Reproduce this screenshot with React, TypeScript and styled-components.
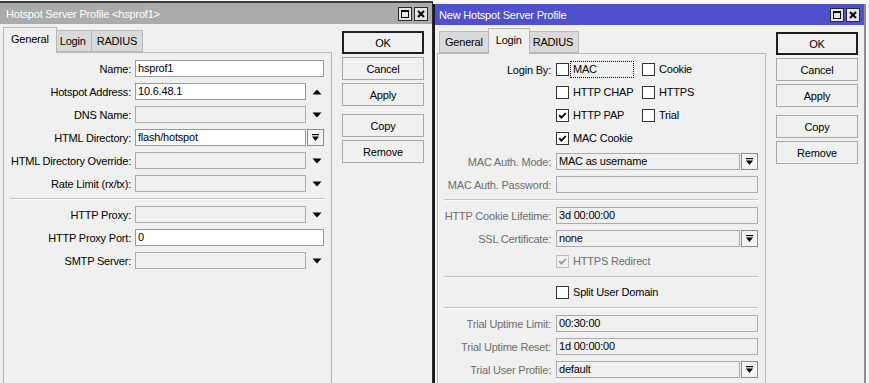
import React from 'react';
import styled, { createGlobalStyle } from 'styled-components';

const fontFamily = '"Liberation Sans", Arial, sans-serif';
const panelBg = '#f0f0f0';
const frameLine = '#b9b9b9';
const mutedText = '#6d6d6d';

const GlobalStyle = createGlobalStyle`
  html, body {
    margin: 0;
    padding: 0;
    height: 383px;
    overflow: hidden;
    background: #f7f7f7;
  }
  body {
    font-family: ${fontFamily};
    font-size: 11px;
    letter-spacing: -0.2px;
    color: #000;
  }
`;

const Desktop = styled.div`
  display: flex;
  align-items: flex-start;
  width: 869px;
  height: 383px;
  overflow: hidden;
`;

interface IWindowProps {
  $active?: boolean;
}
const Window = styled.div<IWindowProps>`
  box-sizing: border-box;
  width: 433px;
  height: ${props => (props.$active ? 379 : 382)}px;
  margin-top: ${props => (props.$active ? 4 : 1)}px;
  display: flex;
  flex-direction: column;
  background: ${panelBg};
  border-top: ${props => (props.$active ? 'none' : '2px solid #3c3c3c')};
  border-left: ${props => (props.$active ? '2px solid #1c1c1c' : 'none')};
  border-right: ${props => (props.$active ? '2px solid #8e8e8e' : '1px solid #2a2a2a')};
`;

const TitleBar = styled.div<IWindowProps>`
  height: 21px;
  flex: none;
  display: flex;
  align-items: center;
  padding: 0 3px 0 ${props => (props.$active ? 4 : 6)}px;
  background: ${props => (props.$active ? '#4e51cb' : '#ababab')};
  color: #fff;
  font-size: 11px;
`;

const TitleText = styled.span`
  flex: 1;
  white-space: nowrap;
`;

const TitleButtons = styled.div`
  display: flex;
  gap: 2px;
  margin-right: 1px;
`;

const TitleButton = styled.div`
  box-sizing: border-box;
  width: 14px;
  height: 14px;
  border: 1px solid #2b2b2b;
  background: #e4e4e4;
  display: flex;
  align-items: center;
  justify-content: center;
`;

const Body = styled.div<IWindowProps>`
  flex: 1;
  display: flex;
  padding-left: ${props => (props.$active ? 2 : 3)}px;
  min-height: 0;
`;

const TabArea = styled.div`
  width: 329px;
  display: flex;
  flex-direction: column;
  padding-top: 3px;
`;

const TabStrip = styled.div`
  height: 25px;
  display: flex;
  align-items: flex-end;
  padding-left: 2px;
  position: relative;
  z-index: 1;
`;

interface ITabProps {
  $selected?: boolean;
}
const Tab = styled.div<ITabProps>`
  box-sizing: border-box;
  height: ${props => (props.$selected ? 26 : 22)}px;
  margin: 0 ${props => (props.$selected ? -2 : 0)}px
    ${props => (props.$selected ? -1 : 0)}px;
  padding: 0 ${props => (props.$selected ? 7 : 5)}px
    ${props => (props.$selected ? 3 : 0)}px;
  border: 1px solid ${frameLine};
  border-bottom: ${props => (props.$selected ? 'none' : `1px solid ${frameLine}`)};
  background: ${props => (props.$selected ? panelBg : '#dadada')};
  position: relative;
  z-index: ${props => (props.$selected ? 2 : 0)};
  display: flex;
  align-items: center;
  white-space: nowrap;
  & + & {
    margin-left: ${props => (props.$selected ? -2 : -1)}px;
  }
`;

const Panel = styled.div`
  flex: 1;
  border: 1px solid ${frameLine};
  border-bottom: none;
  padding: 7px 7px 0 0;
  display: flex;
  flex-direction: column;
  gap: 6px;
`;

interface IRowProps {
  $labelWidth: number;
  $gap: number;
}
const Row = styled.div<IRowProps>`
  display: grid;
  grid-template-columns: ${props => props.$labelWidth}px 1fr;
  column-gap: ${props => props.$gap}px;
  align-items: center;
  height: 17px;
`;

interface ILabelProps {
  $muted?: boolean;
}
const Label = styled.span<ILabelProps>`
  text-align: right;
  white-space: nowrap;
  color: ${props => (props.$muted ? mutedText : '#000')};
`;

const FieldLine = styled.div`
  display: flex;
  align-items: center;
  height: 17px;
`;

interface IFieldProps {
  $editable?: boolean;
}
const Field = styled.div<IFieldProps>`
  flex: 1;
  box-sizing: border-box;
  height: 17px;
  border: 1px solid ${props => (props.$editable ? '#9a9a9a' : '#ababab')};
  background: ${props => (props.$editable ? '#fff' : panelBg)};
  padding: 0 2px;
  line-height: 15px;
  white-space: nowrap;
  overflow: hidden;
`;

const ArrowSlot = styled.div`
  width: 18px;
  height: 17px;
  display: flex;
  align-items: center;
  justify-content: flex-end;
  padding-right: 2px;
  box-sizing: border-box;
`;

const DropButton = styled.div`
  box-sizing: border-box;
  width: 17px;
  height: 17px;
  margin-left: 1px;
  border: 1px solid #8c8c8c;
  background: #f4f4f4;
  display: flex;
  align-items: center;
  justify-content: center;
`;

const Separator = styled.div`
  height: 1px;
  margin-left: 6px;
  background: #c4c4c4;
  border-bottom: 1px solid #fbfbfb;
`;

const CheckGrid = styled.div`
  display: grid;
  grid-template-columns: 86px auto;
  align-items: center;
`;

const CheckItem = styled.div`
  display: flex;
  align-items: center;
  height: 17px;
`;

interface IBoxProps {
  $disabled?: boolean;
}
const Box = styled.div<IBoxProps>`
  box-sizing: border-box;
  width: 13px;
  height: 13px;
  flex: none;
  border: 1px solid ${props => (props.$disabled ? '#bcbcbc' : '#333')};
  background: ${props => (props.$disabled ? '#f0f0f0' : '#fff')};
  display: flex;
  align-items: center;
  justify-content: center;
`;

interface ICheckLabelProps {
  $focused?: boolean;
  $muted?: boolean;
}
const CheckLabel = styled.span<ICheckLabelProps>`
  box-sizing: border-box;
  margin-left: 1px;
  padding: 0 2px;
  height: 17px;
  line-height: 15px;
  white-space: nowrap;
  border: 1px dotted ${props => (props.$focused ? '#000' : 'transparent')};
  width: ${props => (props.$focused ? '64px' : 'auto')};
  color: ${props => (props.$muted ? mutedText : '#000')};
`;

const ButtonColumn = styled.div`
  margin-left: 10px;
  padding-top: 7px;
  display: flex;
  flex-direction: column;
  gap: 8px;
`;

const ButtonGroup = styled.div`
  display: flex;
  flex-direction: column;
  gap: 3px;
`;

interface IButtonProps {
  $default?: boolean;
}
const Button = styled.div<IButtonProps>`
  box-sizing: border-box;
  width: 82px;
  height: 23px;
  display: flex;
  align-items: center;
  justify-content: center;
  background: ${panelBg};
  border: ${props => (props.$default ? '2px solid #1e1e1e' : '1px solid #a8a8a8')};
`;

const MaxIcon = () => (
  <svg width="10" height="10" viewBox="0 0 10 10">
    <rect x="1.5" y="1.5" width="7" height="7" fill="none" stroke="#000" />
    <line x1="1" y1="2" x2="9" y2="2" stroke="#000" strokeWidth="2" />
  </svg>
);

const CloseIcon = () => (
  <svg width="10" height="10" viewBox="0 0 10 10">
    <path d="M2 2 L8 8 M8 2 L2 8" stroke="#000" strokeWidth="2" />
  </svg>
);

const Triangle: React.FC<{ up?: boolean }> = ({ up }) => (
  <svg width="10" height="6" viewBox="0 0 10 6">
    <polygon points={up ? '0.5,5.5 5,0.5 9.5,5.5' : '0.5,0.5 9.5,0.5 5,5.5'} fill="#000" />
  </svg>
);

const DropIcon = () => (
  <svg width="9" height="9" viewBox="0 0 9 9">
    <rect x="1" y="1" width="7" height="1.2" fill="#000" />
    <polygon points="1,3.5 8,3.5 4.5,8" fill="#000" />
  </svg>
);

const CheckMark: React.FC<{ color?: string }> = ({ color = '#000' }) => (
  <svg width="9" height="9" viewBox="0 0 9 9">
    <polyline points="1.2,4.2 3.4,6.6 7.8,2" fill="none" stroke={color} strokeWidth="1.8" />
  </svg>
);

type Trail = 'up' | 'down' | 'drop';

interface IFieldRowProps {
  label: string;
  value?: string;
  editable?: boolean;
  trail?: Trail;
  muted?: boolean;
  labelWidth: number;
  gap: number;
}

const FieldRow: React.FC<IFieldRowProps> = ({
  label,
  value,
  editable,
  trail,
  muted,
  labelWidth,
  gap
}) => (
  <Row $labelWidth={labelWidth} $gap={gap}>
    <Label $muted={muted}>{label}:</Label>
    <FieldLine>
      <Field $editable={editable}>{value}</Field>
      {trail === 'up' && (
        <ArrowSlot>
          <Triangle up />
        </ArrowSlot>
      )}
      {trail === 'down' && (
        <ArrowSlot>
          <Triangle />
        </ArrowSlot>
      )}
      {trail === 'drop' && (
        <DropButton>
          <DropIcon />
        </DropButton>
      )}
    </FieldLine>
  </Row>
);

interface ICheckProps {
  text: string;
  checked?: boolean;
  disabled?: boolean;
  focused?: boolean;
}
const Check: React.FC<ICheckProps> = ({ text, checked, disabled, focused }) => (
  <CheckItem>
    <Box $disabled={disabled}>
      {checked && <CheckMark color={disabled ? '#9a9a9a' : '#000'} />}
    </Box>
    <CheckLabel $focused={focused} $muted={disabled}>
      {text}
    </CheckLabel>
  </CheckItem>
);

const Buttons = () => (
  <ButtonColumn>
    <ButtonGroup>
      <Button $default>OK</Button>
      <Button>Cancel</Button>
      <Button>Apply</Button>
    </ButtonGroup>
    <ButtonGroup>
      <Button>Copy</Button>
      <Button>Remove</Button>
    </ButtonGroup>
  </ButtonColumn>
);

const WindowTitle: React.FC<{ title: string; active?: boolean }> = ({ title, active }) => (
  <TitleBar $active={active}>
    <TitleText>{title}</TitleText>
    <TitleButtons>
      <TitleButton>
        <MaxIcon />
      </TitleButton>
      <TitleButton>
        <CloseIcon />
      </TitleButton>
    </TitleButtons>
  </TitleBar>
);

const L = { labelWidth: 127, gap: 4 };
const R = { labelWidth: 113, gap: 5, muted: true };

const ServerProfileWindow = () => (
  <Window>
    <WindowTitle title="Hotspot Server Profile <hsprof1>" />
    <Body>
      <TabArea>
        <TabStrip>
          <Tab $selected>General</Tab>
          <Tab>Login</Tab>
          <Tab>RADIUS</Tab>
        </TabStrip>
        <Panel>
          <FieldRow {...L} label="Name" value="hsprof1" editable />
          <FieldRow {...L} label="Hotspot Address" value="10.6.48.1" editable trail="up" />
          <FieldRow {...L} label="DNS Name" trail="down" />
          <FieldRow {...L} label="HTML Directory" value="flash/hotspot" editable trail="drop" />
          <FieldRow {...L} label="HTML Directory Override" trail="down" />
          <FieldRow {...L} label="Rate Limit (rx/tx)" trail="down" />
          <Separator />
          <FieldRow {...L} label="HTTP Proxy" trail="down" />
          <FieldRow {...L} label="HTTP Proxy Port" value="0" editable />
          <FieldRow {...L} label="SMTP Server" trail="down" />
        </Panel>
      </TabArea>
      <Buttons />
    </Body>
  </Window>
);

const NewProfileWindow = () => (
  <Window $active>
    <WindowTitle title="New Hotspot Server Profile" active />
    <Body $active>
      <TabArea>
        <TabStrip>
          <Tab>General</Tab>
          <Tab $selected>Login</Tab>
          <Tab>RADIUS</Tab>
        </TabStrip>
        <Panel>
          <Row $labelWidth={R.labelWidth} $gap={R.gap}>
            <Label>Login By:</Label>
            <CheckGrid>
              <Check text="MAC" focused />
              <Check text="Cookie" />
            </CheckGrid>
          </Row>
          <Row $labelWidth={R.labelWidth} $gap={R.gap}>
            <span />
            <CheckGrid>
              <Check text="HTTP CHAP" />
              <Check text="HTTPS" />
            </CheckGrid>
          </Row>
          <Row $labelWidth={R.labelWidth} $gap={R.gap}>
            <span />
            <CheckGrid>
              <Check text="HTTP PAP" checked />
              <Check text="Trial" />
            </CheckGrid>
          </Row>
          <Row $labelWidth={R.labelWidth} $gap={R.gap}>
            <span />
            <CheckGrid>
              <Check text="MAC Cookie" checked />
            </CheckGrid>
          </Row>
          <FieldRow {...R} label="MAC Auth. Mode" value="MAC as username" trail="drop" />
          <FieldRow {...R} label="MAC Auth. Password" />
          <Separator />
          <FieldRow {...R} label="HTTP Cookie Lifetime" value="3d 00:00:00" />
          <FieldRow {...R} label="SSL Certificate" value="none" trail="drop" />
          <Row $labelWidth={R.labelWidth} $gap={R.gap}>
            <span />
            <Check text="HTTPS Redirect" checked disabled />
          </Row>
          <Separator />
          <Row $labelWidth={R.labelWidth} $gap={R.gap}>
            <span />
            <Check text="Split User Domain" />
          </Row>
          <Separator />
          <FieldRow {...R} label="Trial Uptime Limit" value="00:30:00" />
          <FieldRow {...R} label="Trial Uptime Reset" value="1d 00:00:00" />
          <FieldRow {...R} label="Trial User Profile" value="default" trail="drop" />
        </Panel>
      </TabArea>
      <Buttons />
    </Body>
  </Window>
);

const App: React.FC = () => (
  <>
    <GlobalStyle />
    <Desktop>
      <ServerProfileWindow />
      <NewProfileWindow />
    </Desktop>
  </>
);

export default App;
